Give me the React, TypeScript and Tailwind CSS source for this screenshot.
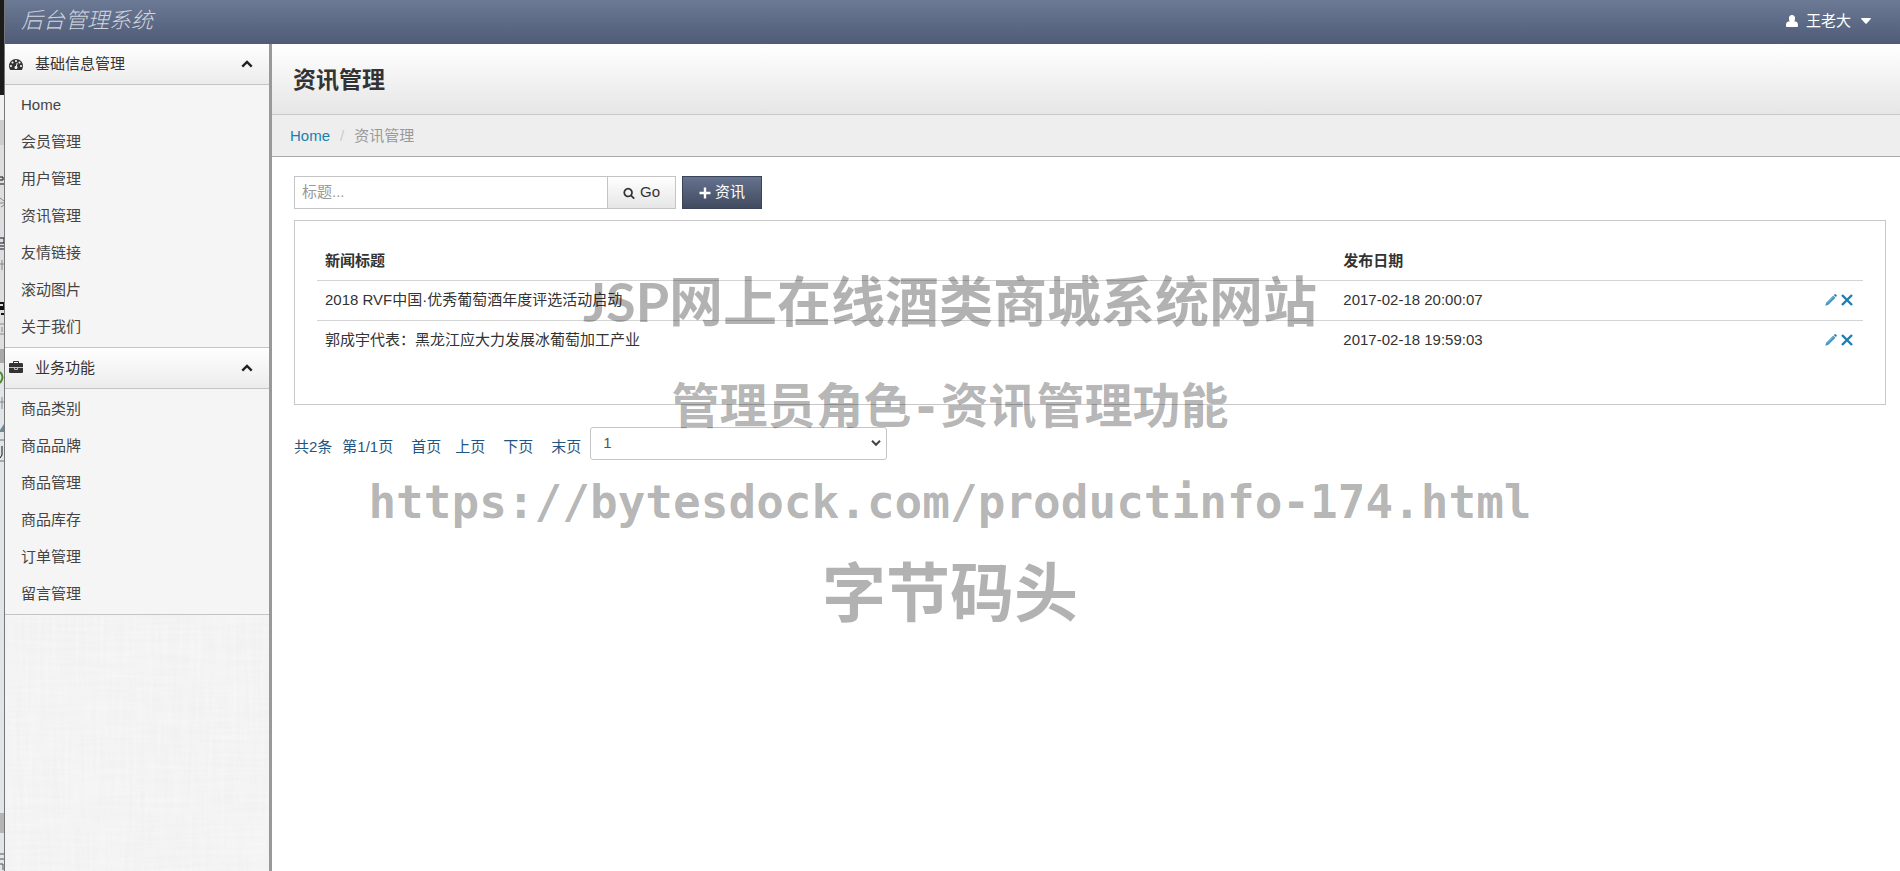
import React, { useState } from "react";

const PATHS = {
  dashboard:
    "M384 1152q0-53-37.500-90.500t-90.500-37.500-90.500 37.500-37.500 90.500 37.500 90.500 90.500 37.500 90.500-37.500 37.500-90.500zm192-448q0-53-37.500-90.500t-90.500-37.500-90.500 37.500-37.500 90.500 37.500 90.500 90.500 37.500 90.500-37.500 37.500-90.500zm428 481l101-382q6-26-7.500-48.500t-38.500-29.500-48 6.500-30 39.500l-101 382q-60 5-107 43.500t-63 98.500q-20 77 20 146t117 89 146-20 89-117q16-60-6-117t-72-91zm660-33q0-53-37.500-90.500t-90.500-37.500-90.500 37.500-37.500 90.500 37.500 90.500 90.500 37.500 90.500-37.500 37.500-90.500zm-640-640q0-53-37.500-90.500t-90.500-37.500-90.500 37.500-37.500 90.500 37.500 90.500 90.500 37.500 90.500-37.500 37.500-90.500zm448 192q0-53-37.500-90.500t-90.500-37.500-90.500 37.500-37.500 90.500 37.500 90.500 90.500 37.500 90.500-37.500 37.500-90.500zm320 448q0 261-141 483-19 29-54 29h-1402q-35 0-54-29-141-221-141-483 0-182 71-348t191-286 286-191 348-71 348 71 286 191 191 286 71 348z",
  briefcase:
    "M640 256h512v-128h-512v128zm1152 640v480q0 66-47 113t-113 47h-1472q-66 0-113-47t-47-113v-480h672v160q0 26 19 45t45 19h320q26 0 45-19t19-45v-160h672zm-768 0v128h-256v-128h256zm768-480v384h-1792v-384q0-66 47-113t113-47h352v-160q0-40 28-68t68-28h576q40 0 68 28t28 68v160h352q66 0 113 47t47 113z",
  search:
    "M1216 832q0-185-131.500-316.500t-316.500-131.500-316.500 131.500-131.500 316.500 131.500 316.500 316.500 131.500 316.500-131.500 131.500-316.500zm512 832q0 52-38 90t-90 38q-54 0-90-38l-343-342q-179 124-399 124-143 0-273.500-55.500t-225-150-150-225-55.500-273.500 55.500-273.500 150-225 225-150 273.500-55.500 273.500 55.500 225 150 150 225 55.500 273.500q0 220-124 399l343 343q37 37 37 90z",
};

function GlyphIcon({ name, className }: { name: keyof typeof PATHS; className: string }) {
  return (
    <svg aria-hidden="true" className={className} fill="currentColor" viewBox="0 0 1792 1792">
      <path d={PATHS[name]} />
    </svg>
  );
}

type MenuGroup = {
  title: string;
  icon: keyof typeof PATHS;
  items: string[];
};

const MENU: MenuGroup[] = [
  {
    title: "基础信息管理",
    icon: "dashboard",
    items: ["Home", "会员管理", "用户管理", "资讯管理", "友情链接", "滚动图片", "关于我们"],
  },
  {
    title: "业务功能",
    icon: "briefcase",
    items: ["商品类别", "商品品牌", "商品管理", "商品库存", "订单管理", "留言管理"],
  },
];

const NEWS = [
  { title: "2018 RVF中国·优秀葡萄酒年度评选活动启动", date: "2017-02-18 20:00:07" },
  { title: "郭成宇代表：黑龙江应大力发展冰葡萄加工产业", date: "2017-02-18 19:59:03" },
];

// The strip of the window that lies behind the page on the left.
function BackWindow() {
  return (
    <svg aria-hidden="true" className="w-[5px] shrink-0 self-stretch bg-[#e2e5e7]" width="5">
      <rect fill="#1c1c1c" height="95" width="4" />
      <rect fill="#f0f0f0" height="25" width="4" y="95" />
      <rect fill="#cccccc" height="25" width="4" y="120" />
      <rect fill="#dcdee0" height="204" width="4" y="145" />
      <rect fill="#a8a8a8" height="14" width="4" y="349" />
      <path d="M0 177h3v3H0M0 184h4" fill="none" stroke="#111" />
      <path d="M0 198l4 3M0 203h4M1 207l3-2" fill="none" stroke="#888" />
      <path d="M0 238h4v5H0M0 246h4M0 249h4" fill="none" stroke="#112" />
      <path d="M0 264h4M2 260v10" fill="none" stroke="#888" />
      <path d="M0 303h4v4H0M0 309h4M1 314h3" fill="none" stroke="#111" strokeWidth="2" />
      <path d="M0 324h4M0 334h4M2 327v5" fill="none" stroke="#888" />
      <path d="M0 372q5 5 0 11" fill="none" stroke="#4d8b2f" strokeWidth="2" />
      <path d="M2 397v12M0 402h4" fill="none" stroke="#7b8794" />
      <path d="M0 430l4-6v8H0" fill="#6f8896" />
      <path d="M0 440h4M0 461h4" stroke="#5d7078" />
      <path d="M2 446v9l-2 3" fill="none" stroke="#111" />
      <rect fill="#b4b4b4" height="20" width="4" y="813" />
      <path d="M0 854h4M0 859h4M0 864h3v6" fill="none" stroke="#555" />
      <rect fill="#777777" height="100%" width="1" x="4" />
    </svg>
  );
}

function TopBar() {
  return (
    <header className="flex h-11 items-center justify-between bg-linear-to-b from-[#6c7a96] to-[#4f5b77] pr-[29px] pl-4">
      <a className="pb-0.5 text-[22px] leading-8 font-light text-[#d0d4dd] italic" href="#home">
        后台管理系统
      </a>
      <button className="flex items-center pb-0.5 text-[15px] text-white" type="button">
        <svg aria-hidden="true" className="mr-2 h-3 w-3" fill="currentColor" viewBox="0 0 12 12">
          <path d="M6 0C4 0 2.900 1.400 2.900 3.300c0 1.300.3 2.200.9 3C2 6.300 0 7.200 0 10.200 0 11.500.3 12 1 12h10c.7 0 1-.5 1-1.800 0-3-2-3.900-3.800-3.900.6-.8.9-1.700.9-3C9.100 1.400 8 0 6 0z" />
        </svg>
        王老大
        <svg aria-hidden="true" className="ml-[10px] h-[6px] w-[10px]" fill="currentColor" viewBox="0 0 10 6">
          <path d="M.6 0h8.800q.9.200.3 1L5.700 5.500q-.7.700-1.400 0L.3 1Q-.3.200.6 0z" />
        </svg>
      </button>
    </header>
  );
}

function SidebarGroup({ group }: { group: MenuGroup }) {
  const [open, setOpen] = useState(true);

  return (
    <section>
      <button
        aria-expanded={open}
        className="flex h-[41px] w-full items-center border-b border-[#c4c4c4] bg-linear-to-b from-white to-[#ececec] pr-4 pl-1 text-[15px] text-[#333]"
        onClick={() => setOpen(!open)}
        type="button"
      >
        <GlyphIcon className="h-[14px] w-[14px]" name={group.icon} />
        <span className="ml-3">{group.title}</span>
        <svg aria-hidden="true" className="ml-auto h-3 w-3" fill="none" viewBox="0 0 12 12">
          <path d="M1.300 8.700L6 4l4.700 4.700" stroke="#222" strokeWidth="2.400" />
        </svg>
      </button>
      {open ? (
        <ul className="border-b border-[#c4c4c4] bg-[#f5f5f5] pt-px pb-0.5">
          {group.items.map((item) => (
            <li key={item}>
              <a className="block py-2 pl-4 text-[15px] leading-[21px] text-[#444]" href={`#${item}`}>
                {item}
              </a>
            </li>
          ))}
        </ul>
      ) : null}
    </section>
  );
}

// Faint woven paper behind the menu.
function PaperTexture() {
  return (
    <svg aria-hidden="true" className="block h-0 w-full flex-1">
      <filter id="weave-x">
        <feTurbulence baseFrequency="0.015 0.25" numOctaves="2" seed="4" type="fractalNoise" />
        <feColorMatrix values="0 0 0 0 1  0 0 0 0 1  0 0 0 0 1  1.600 0 0 0 -0.500" />
      </filter>
      <filter id="weave-y">
        <feTurbulence baseFrequency="0.25 0.015" numOctaves="2" seed="9" type="fractalNoise" />
        <feColorMatrix values="0 0 0 0 1  0 0 0 0 1  0 0 0 0 1  1.600 0 0 0 -0.500" />
      </filter>
      <rect fill="#f1f1f1" height="100%" width="100%" />
      <rect filter="url(#weave-x)" height="100%" opacity="0.3" width="100%" />
      <rect filter="url(#weave-y)" height="100%" opacity="0.3" width="100%" />
    </svg>
  );
}

function Sidebar() {
  return (
    <nav
      aria-label="后台菜单"
      className="flex w-[267px] shrink-0 flex-col border-r-[3px] border-[#999] bg-[#f3f3f3]"
    >
      {MENU.map((group) => (
        <SidebarGroup group={group} key={group.title} />
      ))}
      <PaperTexture />
    </nav>
  );
}

function RowActions() {
  return (
    <div className="flex items-center justify-end gap-1 pr-0.5">
      <a aria-label="编辑" href="#edit">
        <svg aria-hidden="true" className="h-3 w-3" viewBox="0 0 12 12">
          <path d="M.3 11.700l.9-3L8.300 1.600l2.100 2.100-7.100 7.100z" fill="#3d8fc0" />
          <path d="M8.900 1l.8-.8q.6-.3 1.200.3l.6.6q.5.600.1 1.200l-.7.700z" fill="#2076ad" />
          <path d="M2 9.300L9 2.300" stroke="#a5d0e8" strokeWidth=".7" />
        </svg>
      </a>
      <a aria-label="删除" href="#delete">
        <svg aria-hidden="true" className="h-3 w-3" viewBox="0 0 12 12">
          <path d="M1 1l10 10M11 1L1 11" stroke="#1c7db5" strokeWidth="2.400" />
        </svg>
      </a>
    </div>
  );
}

function NewsTable() {
  return (
    <div className="mt-[11px] border border-[#c8c8c8] px-[22px] pt-5 pb-[44px]">
      <table className="w-full table-fixed border-collapse text-left text-[15px] leading-[23px] text-[#333]">
        <colgroup>
          <col />
          <col className="w-[203px]" />
          <col className="w-[21%]" />
        </colgroup>
        <thead>
          <tr>
            <th className="px-2 py-2 font-bold">新闻标题</th>
            <th className="px-2 py-2 font-bold" colSpan={2}>
              发布日期
            </th>
          </tr>
        </thead>
        <tbody>
          {NEWS.map((row) => (
            <tr className="border-t border-[#d4d4d4]" key={row.date}>
              <td className="px-2 pt-[7px] pb-[9px]">{row.title}</td>
              <td className="px-2 pt-[7px] pb-[9px]">{row.date}</td>
              <td className="px-2 pt-[7px] pb-[9px]">
                <RowActions />
              </td>
            </tr>
          ))}
        </tbody>
      </table>
    </div>
  );
}

function Pagination() {
  return (
    <div className="mt-[22px] flex text-[15px] text-[#1f5582]">
      <div className="flex pt-2 leading-6">
        <span>共2条</span>
        <span className="ml-[10px]">第1/1页</span>
        <a className="ml-[18px]" href="#first">首页</a>
        <a className="ml-[14px]" href="#prev">上页</a>
        <a className="ml-[18px]" href="#next">下页</a>
        <a className="ml-[18px]" href="#last">末页</a>
      </div>
      <div className="relative ml-[9px]">
        <select
          aria-label="页码"
          className="block h-[33px] w-[297px] appearance-none rounded-[3px] border border-[#c4c4c4] bg-white px-3 pb-px text-[15px] text-[#555]"
        >
          <option>1</option>
        </select>
        <svg aria-hidden="true" className="pointer-events-none absolute top-3 right-1.5 h-2 w-[10px]" fill="none" viewBox="0 0 10 8">
          <path d="M1 1.800l4 4 4-4" stroke="#444" strokeWidth="2" />
        </svg>
      </div>
    </div>
  );
}

function Watermark() {
  return (
    <div className="pointer-events-none absolute inset-x-0 top-[266px] flex flex-col items-center font-['DejaVu_Sans_Mono','Noto_Sans_CJK_SC',monospace] font-bold whitespace-nowrap text-black/30">
      <p className="font-['Lato','Noto_Sans_CJK_SC',sans-serif] text-[54px] leading-[72px]">
        JSP网上在线酒类商城系统网站
      </p>
      <p className="mt-8 text-[48px] leading-[72px]">管理员角色-资讯管理功能</p>
      <p className="mt-6 text-[46px] leading-[72px]">https://bytesdock.com/productinfo-174.html</p>
      <p className="mt-5 text-[64px] leading-[72px]">字节码头</p>
    </div>
  );
}

export default function App() {
  return (
    <div className="relative flex min-h-screen overflow-hidden bg-white font-['Liberation_Sans','Noto_Sans_CJK_SC',sans-serif]">
      <BackWindow />
      <div className="flex min-w-0 flex-1 flex-col">
        <TopBar />
        <div className="flex flex-1">
          <Sidebar />
          <main className="min-w-0 flex-1">
            <h1 className="border-b border-[#c8c8c8] bg-linear-to-b from-white to-[#e6e6e6] pt-5 pb-[18px] pl-[21px] text-[23px] leading-8 font-bold text-[#333]">
              资讯管理
            </h1>
            <ol className="flex border-b border-[#a9a9a9] bg-[#eee] py-[9px] pl-[18px] text-[15px] leading-[23px]">
              <li>
                <a className="text-[#1c7fab]" href="#home">Home</a>
              </li>
              <li aria-hidden="true" className="px-[10px] text-[#ccc]">/</li>
              <li className="text-[#999]">资讯管理</li>
            </ol>
            <div className="pt-[19px] pr-[14px] pl-[22px]">
              <form className="flex" onSubmit={(e) => e.preventDefault()}>
                <input
                  aria-label="标题"
                  className="h-[33px] w-[314px] border border-[#c4c4c4] px-[7px] pb-0.5 text-[15px] text-[#555] placeholder:text-[#999]"
                  placeholder="标题..."
                  type="text"
                />
                <button
                  className="-ml-px flex h-[33px] w-[69px] items-center justify-center gap-[5px] border border-[#c4c4c4] bg-linear-to-b from-white to-[#e6e6e6] text-[15px] text-[#333]"
                  type="submit"
                >
                  <GlyphIcon className="h-3 w-3" name="search" />
                  Go
                </button>
                <button
                  className="ml-1.5 flex h-[33px] w-20 items-center justify-center gap-1 border border-[#3b4358] bg-linear-to-b from-[#66738f] to-[#414a5f] text-[15px] text-white"
                  type="button"
                >
                  <svg aria-hidden="true" className="h-3 w-3" viewBox="0 0 12 12">
                    <path d="M6 .5v11M.5 6h11" stroke="currentColor" strokeWidth="2.400" />
                  </svg>
                  资讯
                </button>
              </form>
              <NewsTable />
              <Pagination />
            </div>
          </main>
        </div>
      </div>
      <Watermark />
    </div>
  );
}
